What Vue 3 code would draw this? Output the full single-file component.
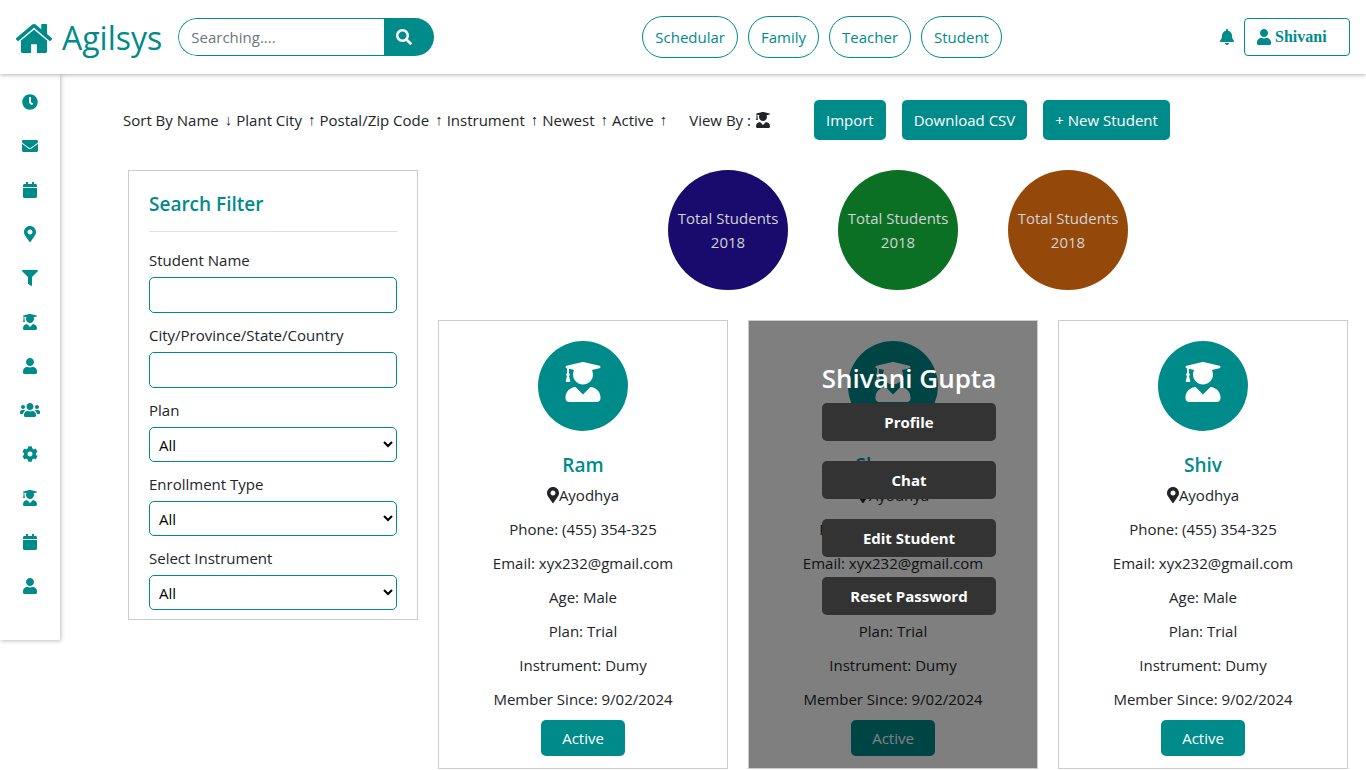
<script setup>
import { ref } from 'vue'

const icons = {
  home: { w: 1664, h: 1792, d: 'M1408 992v480q0 26-19 45t-45 19h-384v-384h-256v384h-384q-26 0-45-19t-19-45v-480q0-1 .5-3t.5-3l575-474 575 474q1 2 1 6zm223-69l-62 74q-8 9-21 11h-3q-13 0-21-7l-692-577-692 577q-12 8-24 7-13-2-21-11l-62-74q-8-10-7-23.5t11-21.5l719-599q32-26 76-26t76 26l244 204v-195q0-14 9-23t23-9h192q14 0 23 9t9 23v408l219 182q10 8 11 21.5t-7 23.5z' },
  search: { w: 512, h: 512, d: 'M505 442.7L405.3 343c-4.5-4.5-10.6-7-17-7H372c27.6-35.3 44-79.7 44-128C416 93.1 322.9 0 208 0S0 93.1 0 208s93.1 208 208 208c48.3 0 92.7-16.4 128-44v16.3c0 6.4 2.5 12.5 7 17l99.7 99.7c9.4 9.4 24.6 9.4 33.9 0l28.3-28.3c9.4-9.4 9.4-24.6.1-34zM208 336c-70.7 0-128-57.2-128-128 0-70.7 57.2-128 128-128 70.7 0 128 57.2 128 128 0 70.7-57.2 128-128 128z' },
  bell: { w: 448, h: 512, d: 'M224 512c35.32 0 63.97-28.65 63.97-64H160.03c0 35.35 28.65 64 63.97 64zm215.39-149.71c-19.32-20.76-55.47-51.99-55.47-154.29 0-77.7-54.48-139.9-127.94-155.16V32c0-17.67-14.32-32-31.98-32s-31.98 14.33-31.98 32v20.84C118.56 68.1 64.08 130.3 64.08 208c0 102.3-36.15 133.53-55.47 154.29-6 6.45-8.66 14.16-8.61 21.71.11 16.4 12.98 32 32.1 32h383.8c19.12 0 32-15.6 32.1-32 .05-7.55-2.61-15.27-8.61-21.71z' },
  clock: { w: 512, h: 512, d: 'M256,8C119,8,8,119,8,256S119,504,256,504,504,393,504,256,393,8,256,8Zm92.49,313h0l-20,25a16,16,0,0,1-22.49,2.5h0l-67-49.72a40,40,0,0,1-15-31.23V112a16,16,0,0,1,16-16h32a16,16,0,0,1,16,16V256l58,42.5A16,16,0,0,1,348.49,321Z' },
  envelope: { w: 512, h: 512, d: 'M502.3 190.8c3.9-3.1 9.7-.2 9.7 4.7V400c0 26.5-21.5 48-48 48H48c-26.5 0-48-21.5-48-48V195.6c0-5 5.7-7.8 9.7-4.7 22.4 17.4 52.1 39.5 154.1 113.6 21.1 15.4 56.7 47.8 92.2 47.6 35.7.3 72-32.8 92.3-47.6 102-74.1 131.6-96.3 154-113.7zM256 320c23.2.4 56.6-29.2 73.4-41.4 132.7-96.3 142.8-104.7 173.4-128.7 5.8-4.5 9.2-11.5 9.2-18.9v-19c0-26.5-21.5-48-48-48H48c-26.5 0-48 21.5-48 48v19c0 7.4 3.4 14.3 9.2 18.9 30.6 23.9 40.7 32.4 173.4 128.7 16.8 12.2 50.2 41.8 73.4 41.4z' },
  calendar: { w: 448, h: 512, d: 'M12 192h424c6.6 0 12 5.4 12 12v260c0 26.5-21.5 48-48 48H48c-26.5 0-48-21.5-48-48V204c0-6.6 5.4-12 12-12zm436-44v-36c0-26.5-21.5-48-48-48h-48V12c0-6.6-5.4-12-12-12h-40c-6.6 0-12 5.4-12 12v52H160V12c0-6.6-5.4-12-12-12h-40c-6.6 0-12 5.4-12 12v52H48C21.5 64 0 85.5 0 112v36c0 6.6 5.4 12 12 12h424c6.6 0 12-5.4 12-12z' },
  marker: { w: 384, h: 512, d: 'M172.268 501.67C26.97 291.031 0 269.413 0 192 0 85.961 85.961 0 192 0s192 85.961 192 192c0 77.413-26.97 99.031-172.268 309.67-9.535 13.774-29.93 13.773-39.464 0zM192 272c44.183 0 80-35.817 80-80s-35.817-80-80-80-80 35.817-80 80 35.817 80 80 80z' },
  filter: { w: 512, h: 512, d: 'M487.976 0H24.028C2.71 0-8.047 25.866 7.058 40.971L192 225.941V432c0 7.831 3.821 15.17 10.237 19.662l80 55.98C298.02 518.69 320 507.493 320 487.98V225.941l184.947-184.97C520.021 25.896 509.338 0 487.976 0z' },
  graduate: { w: 448, h: 512, d: 'M319.4 320.6L224 416l-95.4-95.4C57.1 323.7 0 382.2 0 454.4v9.6c0 26.5 21.5 48 48 48h352c26.5 0 48-21.5 48-48v-9.6c0-72.2-57.1-130.7-128.6-133.8zM13.6 79.8l6.4 1.5v58.4c-7 4.2-12 11.5-12 20.3 0 8.4 4.6 15.4 11.1 19.7L3.5 242c-1.7 6.9 2.1 14 7.6 14h41.8c5.5 0 9.3-7.1 7.6-14l-15.6-62.3C51.4 175.4 56 168.4 56 160c0-8.8-5-16.1-12-20.3V87.1l66 15.9c-8.6 17.2-14 36.4-14 57 0 70.7 57.3 128 128 128s128-57.3 128-128c0-20.6-5.3-39.8-14-57l96.3-23.2c18.2-4.4 18.2-27.1 0-31.5l-190.4-46c-13-3.1-26.7-3.1-39.7 0L13.6 48.2c-18.1 4.4-18.1 27.2 0 31.6z' },
  user: { w: 448, h: 512, d: 'M224 256c70.7 0 128-57.3 128-128S294.7 0 224 0 96 57.3 96 128s57.3 128 128 128zm89.6 32h-16.7c-22.2 10.2-46.9 16-72.9 16s-50.6-5.8-72.9-16h-16.7C60.2 288 0 348.2 0 422.4V464c0 26.5 21.5 48 48 48h352c26.5 0 48-21.5 48-48v-41.6c0-74.2-60.2-134.4-134.4-134.4z' },
  users: { w: 640, h: 512, d: 'M96 224c35.3 0 64-28.7 64-64s-28.7-64-64-64-64 28.7-64 64 28.7 64 64 64zm448 0c35.3 0 64-28.7 64-64s-28.7-64-64-64-64 28.7-64 64 28.7 64 64 64zm32 32h-64c-17.6 0-33.5 7.1-45.1 18.6 40.3 22.1 68.9 62 75.1 109.4h66c17.7 0 32-14.3 32-32v-32c0-35.3-28.7-64-64-64zm-256 0c61.9 0 112-50.1 112-112S381.9 32 320 32 208 82.1 208 144s50.1 112 112 112zm76.8 32h-8.3c-20.8 10-43.9 16-68.5 16s-47.6-6-68.5-16h-8.3C179.6 288 128 339.6 128 403.2V432c0 26.5 21.5 48 48 48h288c26.5 0 48-21.5 48-48v-28.8c0-63.6-51.6-115.2-115.2-115.2zm-223.7-13.4C161.5 263.1 145.6 256 128 256H64c-35.3 0-64 28.7-64 64v32c0 17.7 14.3 32 32 32h65.9c6.3-47.4 34.9-87.3 75.2-109.4z' },
  cog: { w: 512, h: 512, d: 'M487.4 315.7l-42.6-24.6c4.3-23.2 4.3-47 0-70.2l42.6-24.6c4.9-2.8 7.1-8.6 5.5-14-11.1-35.6-30-67.8-54.7-94.6-3.8-4.1-10-5.1-14.8-2.3L380.8 110c-17.9-15.4-38.5-27.3-60.8-35.1V25.8c0-5.6-3.9-10.5-9.4-11.7-36.7-8.2-74.3-7.8-109.2 0-5.5 1.2-9.4 6.1-9.4 11.7V75c-22.2 7.9-42.8 19.8-60.8 35.1L88.7 85.5c-4.9-2.8-11-1.9-14.8 2.3-24.7 26.7-43.6 58.9-54.7 94.6-1.7 5.4.6 11.2 5.5 14L67.3 221c-4.3 23.2-4.3 47 0 70.2l-42.6 24.6c-4.9 2.8-7.1 8.6-5.5 14 11.1 35.6 30 67.8 54.7 94.6 3.8 4.1 10 5.1 14.8 2.3l42.6-24.6c17.9 15.4 38.5 27.3 60.8 35.1v49.2c0 5.6 3.9 10.5 9.4 11.7 36.7 8.2 74.3 7.8 109.2 0 5.5-1.2 9.4-6.1 9.4-11.7v-49.2c22.2-7.9 42.8-19.8 60.8-35.1l42.6 24.6c4.9 2.8 11 1.9 14.8-2.3 24.7-26.7 43.6-58.9 54.7-94.6 1.5-5.5-.7-11.3-5.6-14.1zM256 336c-44.1 0-80-35.9-80-80s35.9-80 80-80 80 35.9 80 80-35.9 80-80 80z' }
}
const box = (name) => `0 0 ${icons[name].w} ${icons[name].h}`

const nav = ['Schedular', 'Family', 'Teacher', 'Student']
const side = ['clock', 'envelope', 'calendar', 'marker', 'filter', 'graduate', 'user', 'users', 'cog', 'graduate', 'calendar', 'user']
const sorts = [
  ['Name', '↓'], ['Plant City', '↑'], ['Postal/Zip Code', '↑'],
  ['Instrument', '↑'], ['Newest', '↑'], ['Active', '↑']
]
const actions = ['Import', 'Download CSV', '+ New Student']
const stats = ['blue', 'green', 'brown']
const textFilters = [
  { id: 'student-name', label: 'Student Name' },
  { id: 'place', label: 'City/Province/State/Country' }
]
const listFilters = [
  { id: 'plan', label: 'Plan' },
  { id: 'enrollment', label: 'Enrollment Type' },
  { id: 'instrument', label: 'Select Instrument' }
]
const details = [
  'Phone: (455) 354-325', 'Email: xyx232@gmail.com', 'Age: Male',
  'Plan: Trial', 'Instrument: Dumy', 'Member Since: 9/02/2024'
]
const students = ['Ram', 'Shravan', 'Shiv']
const menu = ['Profile', 'Chat', 'Edit Student', 'Reset Password']
const opened = ref(1)
const query = ref('')
</script>

<template>
  <div class="page">
    <header class="topbar">
      <div class="start">
        <a class="brand" href="#">
          <svg class="logo" viewBox="38 253 1588 1283" aria-hidden="true"><path :d="icons.home.d" /></svg>
          <span>Agilsys</span>
        </a>
        <form class="search" @submit.prevent>
          <input v-model="query" type="text" placeholder="Searching...." aria-label="Search" />
          <button type="submit" aria-label="Search">
            <svg class="icon" :viewBox="box('search')"><path :d="icons.search.d" /></svg>
          </button>
        </form>
      </div>
      <nav class="pills">
        <a v-for="n in nav" :key="n" href="#">{{ n }}</a>
      </nav>
      <div class="account">
        <svg class="icon" :viewBox="box('bell')"><path :d="icons.bell.d" /></svg>
        <button type="button" class="profile">
          <svg class="icon" :viewBox="box('user')"><path :d="icons.user.d" /></svg>
          <span>Shivani</span>
        </button>
      </div>
    </header>

    <div class="body">
      <aside class="sidebar">
        <a v-for="(s, i) in side" :key="i" href="#" :aria-label="s">
          <svg class="icon" :viewBox="box(s)"><path :d="icons[s].d" /></svg>
        </a>
      </aside>

      <main class="content">
        <div class="toolbar">
          <div class="sorting">
            <span>Sort By</span>
            <button v-for="s in sorts" :key="s[0]" type="button">
              <span>{{ s[0] }}</span>
              <span class="arrow">{{ s[1] }}</span>
            </button>
          </div>
          <div class="viewby">
            <span>View By :</span>
            <svg class="icon" :viewBox="box('graduate')"><path :d="icons.graduate.d" /></svg>
          </div>
          <div class="actions">
            <button v-for="a in actions" :key="a" type="button">{{ a }}</button>
          </div>
        </div>

        <div class="columns">
          <form class="filter" @submit.prevent>
            <h2>Search Filter</h2>
            <div v-for="f in textFilters" :key="f.id" class="field">
              <label :for="f.id">{{ f.label }}</label>
              <input :id="f.id" type="text" />
            </div>
            <div v-for="f in listFilters" :key="f.id" class="field">
              <label :for="f.id">{{ f.label }}</label>
              <select :id="f.id"><option>All</option></select>
            </div>
          </form>

          <div class="results">
            <div class="stats">
              <div v-for="s in stats" :key="s" class="stat" :class="s">
                <span>Total Students</span>
                <span>2018</span>
              </div>
            </div>
            <div class="cards">
              <article v-for="(name, i) in students" :key="name" class="card">
                <div class="avatar">
                  <svg viewBox="0 0 448 512"><path :d="icons.graduate.d" /></svg>
                </div>
                <h3>{{ name }}</h3>
                <div class="details">
                  <p class="place">
                    <svg class="icon" :viewBox="box('marker')"><path :d="icons.marker.d" /></svg>Ayodhya
                  </p>
                  <p v-for="d in details" :key="d">{{ d }}</p>
                </div>
                <button type="button" class="status">Active</button>
                <div v-if="i === opened" class="overlay">
                  <div class="menu">
                    <h3>Shivani Gupta</h3>
                    <button v-for="m in menu" :key="m" type="button">{{ m }}</button>
                  </div>
                </div>
              </article>
            </div>
          </div>
        </div>
      </main>
    </div>
  </div>
</template>

<style>
body {
  margin: 0;
  background: #fff;
}
</style>

<style scoped>
.page {
  color: #212529;
  font: 15px/24px 'Segoe UI', 'Open Sans', 'Noto Sans', sans-serif;
}
.page *,
.page *::before {
  box-sizing: border-box;
}
h2,
h3,
p {
  margin: 0;
}
a {
  color: inherit;
  text-decoration: none;
}
button,
input,
select {
  font: inherit;
}
button {
  cursor: pointer;
  border: 0;
  margin: 0;
}
svg {
  fill: currentColor;
  display: block;
  flex: none;
}
.icon {
  height: 16px;
}

.topbar {
  position: relative;
  z-index: 2;
  display: flex;
  align-items: center;
  justify-content: space-between;
  height: 74px;
  padding: 0 16px;
  background: #fff;
  color: #008b8b;
  box-shadow: 0 1px 4px rgba(0, 0, 0, 0.3);
}
.start,
.brand,
.account {
  display: flex;
  align-items: center;
}
.start {
  gap: 16px;
}
.brand {
  gap: 10px;
  padding-top: 2px;
  font-size: 32px;
  line-height: 38px;
  font-weight: 500;
}
.logo {
  width: 36px;
  height: 29px;
}
.search {
  display: flex;
  width: 256px;
  height: 38px;
  border-radius: 19px;
  overflow: hidden;
}
.search input {
  flex: 1;
  min-width: 0;
  padding: 0 12px;
  border: 1px solid #008b8b;
  border-right: 0;
  border-radius: 19px 0 0 19px;
  outline: 0;
}
.search input::placeholder {
  color: #6c757d;
}
.search button {
  width: 50px;
  padding: 0 0 0 12px;
  color: #fff;
  background: #008b8b;
}
.pills {
  display: flex;
  gap: 10px;
  margin-right: 10px;
}
.pills a {
  padding: 8px 12px;
  border: 1px solid #008b8b;
  border-radius: 21px;
}
.account {
  gap: 10px;
}
.profile {
  display: flex;
  align-items: center;
  gap: 4px;
  width: 106px;
  height: 38px;
  padding: 0 12px;
  color: #008b8b;
  background: #fff;
  border: 1px solid #008b8b;
  border-radius: 4px;
  font: bold 16px/24px 'Liberation Serif', 'Times New Roman', serif;
}

.body {
  display: flex;
  align-items: flex-start;
}
.sidebar {
  flex: none;
  width: 60px;
  padding: 6px 0 32px;
  box-shadow: 1px 1px 4px rgba(0, 0, 0, 0.25);
  color: #008b8b;
}
.sidebar a {
  display: flex;
  align-items: center;
  justify-content: center;
  height: 44px;
}
.content {
  flex: 1;
  min-width: 0;
  padding: 26px 18px 0 63px;
}

.toolbar {
  display: flex;
  align-items: center;
  height: 40px;
}
.sorting {
  display: flex;
  gap: 4px;
}
.sorting button {
  display: flex;
  gap: 6px;
  padding: 0;
  background: none;
  color: inherit;
}
.arrow {
  font-family: 'Liberation Sans', Arial, sans-serif;
}
.viewby {
  display: flex;
  align-items: center;
  gap: 5px;
  margin: 0 44px 0 22px;
}
.actions {
  display: flex;
  gap: 16px;
}
.actions button {
  height: 40px;
  padding: 0 12px;
  color: #fff;
  background: #008b8b;
  border-radius: 5px;
}

.columns {
  display: grid;
  grid-template-columns: minmax(0, 290fr) minmax(0, 910fr);
  gap: 20px;
  align-items: start;
  margin: 30px 0 0 5px;
}
.filter {
  padding: 21px 20px 9px;
  border: 1px solid #ccc;
}
.filter h2 {
  padding-bottom: 15px;
  margin-bottom: 16px;
  border-bottom: 1px solid #e0e0e0;
  color: #008b8b;
  font-size: 19px;
  line-height: 24px;
  font-weight: 600;
}
.field + .field {
  margin-top: 10px;
}
.field label {
  display: block;
  margin-bottom: 5px;
}
.field input,
.field select {
  display: block;
  width: 100%;
  height: 36px;
  padding: 0 5px;
  background: #fff;
  border: 1px solid #008b8b;
  border-radius: 5px;
  color: #000;
}
.field select {
  height: 35px;
}

.stats {
  display: flex;
  justify-content: center;
  gap: 50px;
  padding-left: 10px;
}
.stat {
  display: flex;
  flex-direction: column;
  align-items: center;
  justify-content: center;
  width: 120px;
  height: 120px;
  border-radius: 50%;
  color: #d3d3d3;
  white-space: nowrap;
}
.blue {
  background: #190a6d;
}
.green {
  background: #0b7024;
}
.brown {
  background: #94490b;
}

.cards {
  display: grid;
  grid-template-columns: repeat(3, minmax(0, 1fr));
  gap: 20px;
  margin-top: 30px;
}
.card {
  position: relative;
  display: flex;
  flex-direction: column;
  align-items: center;
  padding: 20px 20px 12px;
  border: 1px solid #ccc;
}
.avatar {
  display: flex;
  justify-content: center;
  width: 90px;
  height: 90px;
  padding-top: 21px;
  border-radius: 50%;
  color: #fff;
  background: #008b8b;
}
.avatar svg {
  width: 36px;
  height: 40px;
}
.card > h3 {
  margin: 22px 0 6px;
  color: #008b8b;
  font-size: 19px;
  line-height: 24px;
  font-weight: 600;
}
.details {
  display: flex;
  flex-direction: column;
  align-items: center;
  gap: 10px;
}
.place {
  display: flex;
  align-items: center;
}
.status {
  height: 36px;
  margin-top: 9px;
  padding: 0 21px;
  color: #fff;
  background: #008b8b;
  border-radius: 5px;
}
.overlay {
  position: absolute;
  inset: 0;
  display: flex;
  justify-content: center;
  padding: 41px 0 0 32px;
  background: rgba(0, 0, 0, 0.5);
}
.menu {
  display: flex;
  flex-direction: column;
  gap: 20px;
}
.menu h3 {
  margin-bottom: -12px;
  color: #fff;
  font-size: 26px;
  line-height: 33px;
  font-weight: 600;
}
.menu button {
  height: 38px;
  color: #fff;
  background: #333;
  border-radius: 5px;
  font-weight: 700;
}
</style>
